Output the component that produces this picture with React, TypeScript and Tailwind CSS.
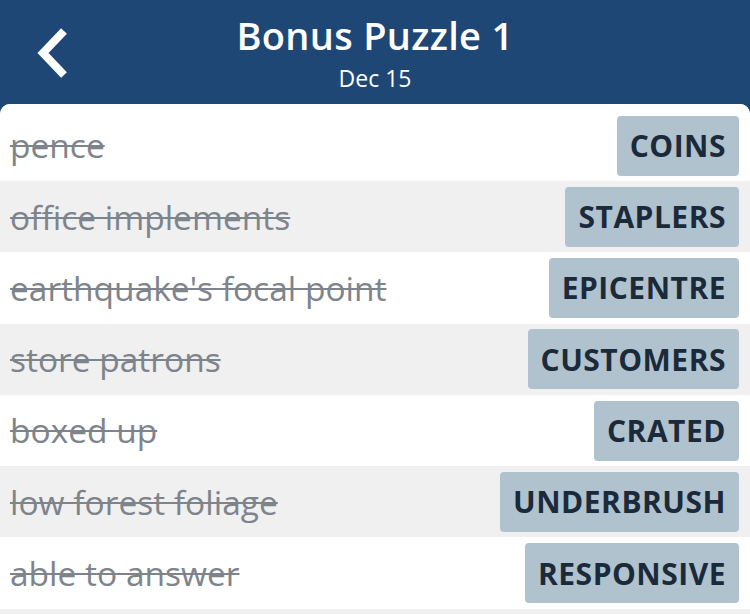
import React from "react";

const rows: [string, string][] = [
  ["pence", "COINS"],
  ["office implements", "STAPLERS"],
  ["earthquake's focal point", "EPICENTRE"],
  ["store patrons", "CUSTOMERS"],
  ["boxed up", "CRATED"],
  ["low forest foliage", "UNDERBRUSH"],
  ["able to answer", "RESPONSIVE"],
  ["", ""],
];

export default function App() {
  return (
    <div
      className="w-[750px] h-[614px] overflow-hidden bg-[#1f4775]"
      style={{ fontFamily: "'Open Sans', sans-serif" }}
    >
      <div className="relative h-[104px] flex flex-col items-center text-white">
        <div className="absolute left-[33px] top-[25px]">
          <svg width="40" height="56" viewBox="0 0 40 56">
            <polyline
              points="31,6 10,28 31,50"
              fill="none"
              stroke="white"
              strokeWidth="8"
              strokeLinecap="butt"
              strokeLinejoin="miter"
            />
          </svg>
        </div>
        <div className="mt-[9px] text-[38px] leading-[52px] font-semibold tracking-[0.3px]">Bonus Puzzle 1</div>
        <div className="mt-[2px] text-[23px] leading-[30px]">Dec 15</div>
      </div>
      <div className="bg-white rounded-t-[10px] overflow-hidden">
        {rows.map(([clue, ans], i) => (
          <div
            key={i}
            className={`flex items-center justify-between pl-[10px] pr-[11px] ${
              i === 0 ? "h-[77px] pt-[6px]" : "h-[71.3px]"
            } ${i % 2 === 0 ? "bg-white" : "bg-[#f0f0f0]"}`}
          >
            <span className="text-[33.5px] text-[#7e848b] line-through decoration-[2px]">{clue}</span>
            {ans && (
              <span className="h-[60px] flex items-center px-[13px] rounded-[4px] bg-[#b1c2cf] text-[#1b2a3a] text-[30px] font-bold tracking-[0.5px]">
                {ans}
              </span>
            )}
          </div>
        ))}
      </div>
    </div>
  );
}
